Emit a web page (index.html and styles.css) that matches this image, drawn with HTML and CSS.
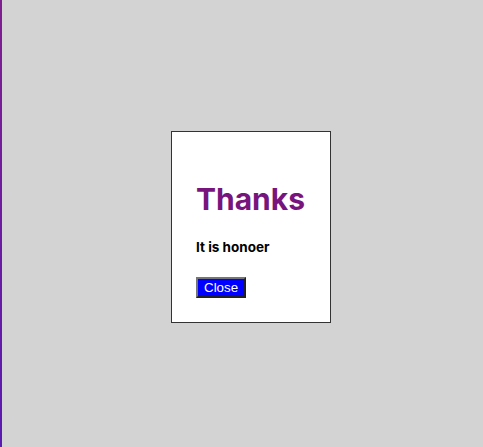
FILE: index.html
```html
<!DOCTYPE html>
<html lang="en">
<head>
    <meta charset="UTF-8">
    <meta name="viewport" content="width=device-width, initial-scale=1.0">
    <title>Thanks</title>
    <link rel="stylesheet" href="styles.css">
</head>
<body>
    <div class="page">
        <!-- Thank you popup -->
        <div class="modal">
            <h1 class="modal-title">Thanks</h1>
            <p class="modal-text">It is honoer</p>
            <button class="close-btn" type="button">Close</button>
        </div>
    </div>
</body>
</html>
```

FILE: styles.css
```css
/* Page backdrop */
html, body {
    margin: 0;
    padding: 0;
    height: 100%;
}
body {
    font-family: Inter, "Liberation Sans", sans-serif;
    background-color: lightgray;
}
.page {
    box-sizing: border-box;
    height: 100%;
    display: flex;
    align-items: center;
    justify-content: center;
    padding: 7px 0 0 17px;
    border-left: 2px solid;
    border-image: linear-gradient(#7f1f8f, #5a1ab0) 1;
}

/* Popup box */
.modal {
    box-sizing: border-box;
    width: 160px;
    height: 192px;
    padding: 0 24px;
    background: #fff;
    border: 1px solid #333;
}
.modal-title {
    margin: 47px 0 0;
    font-size: 30px;
    font-weight: 700;
    line-height: 40px;
    color: #77157d;
}
.modal-text {
    margin: 18px 0 0;
    font-size: 13.5px;
    font-weight: 700;
    line-height: 20px;
    color: #000;
}
.close-btn {
    margin-top: 20px;
    padding: 1px 6px;
    font-family: "Liberation Sans", Arial, sans-serif;
    font-size: 13.33px;
    line-height: 15px;
    color: #fff;
    background-color: blue;
    border: 2px outset #767676;
    cursor: pointer;
}
```
